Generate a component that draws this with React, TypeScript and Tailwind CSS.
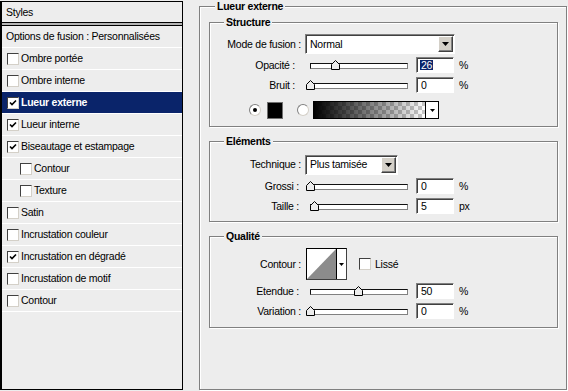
import React from 'react';

const layers = [
  { label: 'Ombre portée', checked: false },
  { label: 'Ombre interne', checked: false },
  { label: 'Lueur externe', checked: true, selected: true },
  { label: 'Lueur interne', checked: true },
  { label: 'Biseautage et estampage', checked: true },
  { label: 'Contour', checked: false, indent: true },
  { label: 'Texture', checked: false, indent: true },
  { label: 'Satin', checked: false },
  { label: 'Incrustation couleur', checked: false },
  { label: 'Incrustation en dégradé', checked: true },
  { label: 'Incrustation de motif', checked: false },
  { label: 'Contour', checked: false },
];

const CheckBox = ({ checked }: { checked: boolean }) => (
  <div className="flex h-[12px] w-[12px] shrink-0 items-center justify-center border border-b-[#d4d0c8] border-l-[#404040] border-r-[#d4d0c8] border-t-[#404040] bg-white">
    {checked && (
      <svg width="8" height="8" viewBox="0 0 8 8">
        <path d="M1 3.5L3 5.5L7 1.5" fill="none" stroke="#000" strokeWidth="1.6" />
      </svg>
    )}
  </div>
);

const DropBtn = () => (
  <div className="flex h-[16px] w-[15px] items-center justify-center border border-b-[#404040] border-l-white border-r-[#404040] border-t-white bg-[#d4d0c8] shadow-[inset_-1px_-1px_0_#808080]">
    <svg width="7" height="4" viewBox="0 0 7 4">
      <path d="M0 0H7L3.5 4Z" fill="#000" />
    </svg>
  </div>
);

const Select = ({ value, width }: { value: string; width: string }) => (
  <div className={`ml-[4px] flex h-[20px] ${width} items-center justify-between border border-b-white border-l-[#808080] border-r-white border-t-[#808080] bg-white pl-[4px] pr-[1px] shadow-[inset_1px_1px_0_#404040]`}>
    <span>{value}</span>
    <DropBtn />
  </div>
);

const Slider = ({ value }: { value: number }) => (
  <div className="relative ml-[4px] flex h-[10px] w-[108px] items-end">
    <div className="mx-[5px] mb-[1px] h-[6px] flex-1 border border-b-[#808080] border-l-[#111] border-r-[#808080] border-t-[#111] bg-white" />
    <svg
      className="absolute top-0"
      style={{ left: Math.round(5 + (value / 100) * 97 - 4.5) }}
      width="9"
      height="10"
      viewBox="0 0 9 10"
    >
      <path d="M0.5 9.5V4.5L4.5 0.5L8.5 4.5V9.5Z" fill="#ececec" stroke="#000" />
    </svg>
  </div>
);

const Field = ({ value, unit, selected }: { value: string; unit: string; selected?: boolean }) => (
  <>
    <div className="ml-[3px] flex h-[16px] w-[38px] items-center border border-b-white border-l-[#808080] border-r-white border-t-[#808080] bg-white pl-[4px] shadow-[inset_1px_1px_0_#404040]">
      {selected ? <span className="-ml-px bg-[#0a246a] px-px text-white">{value}</span> : <span>{value}</span>}
    </div>
    <span className="ml-[5px]">{unit}</span>
  </>
);

const Row = ({ label, pr = '', className = '', children }: { label: string; pr?: string; className?: string; children: React.ReactNode }) => (
  <div className={`flex h-[20px] items-center ${className}`}>
    <div className={`w-[91px] shrink-0 text-right ${pr}`}>{label}</div>
    {children}
  </div>
);

const Group = ({ title, className, children }: { title: string; className: string; children: React.ReactNode }) => (
  <fieldset className={`mr-[8px] ml-[9px] border border-[#808080] shadow-[inset_1px_1px_0_#fff,1px_1px_0_#fff] ${className}`}>
    <legend className="ml-[14px] bg-[#ededed] px-[2px] leading-[12px] font-bold">{title}</legend>
    {children}
  </fieldset>
);

export default function App() {
  return (
    <div className="flex h-[391px] w-[568px] overflow-hidden bg-[#ededed] font-['Liberation_Sans','DejaVu_Sans',sans-serif] text-[10.5px] leading-none tracking-[-0.25px] text-black">
      {/* styles list */}
      <div className="mt-px flex h-[389px] w-[183px] shrink-0 flex-col border border-l-2 border-black">
        <div className="flex h-[20px] items-center pl-[4px]">Styles</div>
        <div className="h-[4px] border-y border-black bg-[#b4b4b4]" />
        <div className="flex h-[22px] items-center border-b border-white pl-[4px]">Options de fusion : Personnalisées</div>
        {layers.map((l, i) => (
          <div
            key={i}
            className={`flex h-[22px] items-center border-b border-white ${l.indent ? 'pl-[18px]' : 'pl-[5px]'} ${l.selected ? 'bg-[#0a246a] font-bold text-white' : ''}`}
          >
            <CheckBox checked={l.checked} />
            <span className="ml-[2px]">{l.label}</span>
          </div>
        ))}
      </div>

      {/* settings */}
      <div className="flex-1 pl-[16px] pr-px">
        <fieldset className="h-[390px] border border-[#808080] shadow-[inset_1px_1px_0_#fff,1px_1px_0_#fff]">
          <legend className="ml-[15px] bg-[#ededed] px-[2px] leading-[12px] font-bold">Lueur externe</legend>

          <Group title="Structure" className="mt-[4px] h-[111px]">
            <Row label="Mode de fusion :" className="mt-[6px]">
              <Select value="Normal" width="w-[150px]" />
            </Row>
            <Row label="Opacité :" pr="pr-[6px]" className="mt-px">
              <Slider value={26} />
              <Field value="26" unit="%" selected />
            </Row>
            <Row label="Bruit :" pr="pr-[6px]">
              <Slider value={0} />
              <Field value="0" unit="%" />
            </Row>
            <div className="mt-[6px] flex h-[18px] items-center pl-[39px]">
              <div className="flex h-[12px] w-[12px] items-center justify-center rounded-full border border-b-[#d4d0c8] border-l-[#808080] border-r-[#d4d0c8] border-t-[#808080] bg-white">
                <div className="h-[4px] w-[4px] rounded-full bg-black" />
              </div>
              <div className="ml-[6px] h-[17px] w-[16px] border border-[#707070] bg-black" />
              <div className="ml-[14px] h-[12px] w-[12px] rounded-full border border-b-[#d4d0c8] border-l-[#808080] border-r-[#d4d0c8] border-t-[#808080] bg-white" />
              <div className="ml-[4px] flex h-[18px] w-[126px] border border-black">
                <div className="flex-1 bg-[linear-gradient(to_right,#000,rgba(0,0,0,0)),repeating-conic-gradient(#c8c8c8_0%_25%,#ffffff_0%_50%)] bg-[length:100%_100%,8px_8px]" />
                <div className="flex w-[13px] items-center justify-center border-l border-black bg-white">
                  <svg width="5" height="3" viewBox="0 0 5 3">
                    <path d="M0 0H5L2.5 3Z" fill="#000" />
                  </svg>
                </div>
              </div>
            </div>
          </Group>

          <Group title="Eléments" className="mt-[8px] h-[87px]">
            <Row label="Technique :" className="mt-[7px] h-[21px]">
              <Select value="Plus tamisée" width="w-[93px]" />
            </Row>
            <Row label="Grossi :" pr="pr-[2px]" className="mt-px">
              <Slider value={0} />
              <Field value="0" unit="%" />
            </Row>
            <Row label="Taille :" pr="pr-[2px]">
              <Slider value={5} />
              <Field value="5" unit="px" />
            </Row>
          </Group>

          <Group title="Qualité" className="mt-[8px] h-[98px]">
            <div className="mt-[6px] flex h-[32px] items-center">
              <div className="w-[91px] shrink-0 text-right">Contour :</div>
              <div className="ml-[5px] flex h-[32px] w-[41px] border border-b-[#404040] border-l-black border-r-[#404040] border-t-black bg-white">
                <svg width="29" height="30" viewBox="0 0 29 30" className="shrink-0">
                  <path d="M0 30L29 0V30Z" fill="#8c8c8c" />
                </svg>
                <div className="flex flex-1 items-center justify-center border-l border-black">
                  <svg width="5" height="3" viewBox="0 0 5 3">
                    <path d="M0 0H5L2.5 3Z" fill="#000" />
                  </svg>
                </div>
              </div>
              <div className="ml-[12px]">
                <CheckBox checked={false} />
              </div>
              <span className="ml-[4px]">Lissé</span>
            </div>
            <Row label="Etendue :" pr="pr-[2px]" className="mt-px">
              <Slider value={50} />
              <Field value="50" unit="%" />
            </Row>
            <Row label="Variation :">
              <Slider value={0} />
              <Field value="0" unit="%" />
            </Row>
          </Group>
        </fieldset>
      </div>
    </div>
  );
}
